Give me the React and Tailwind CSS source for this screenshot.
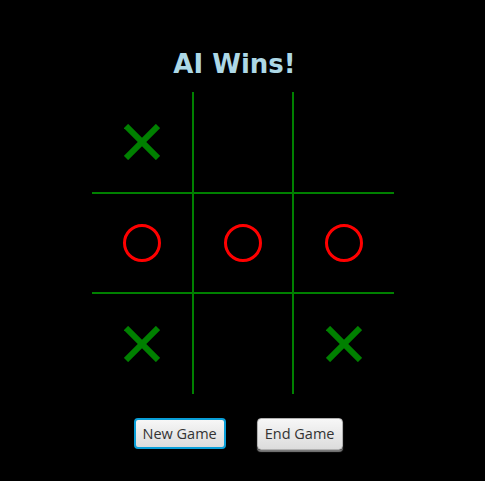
import React from 'react';

const board = [
  ['X', '', ''],
  ['O', 'O', 'O'],
  ['X', '', 'X'],
];

function Cross() {
  return (
    <svg width="36" height="36" viewBox="0 0 36 36">
      <line x1="2" y1="2" x2="34" y2="34" stroke="#008000" strokeWidth="6" />
      <line x1="34" y1="2" x2="2" y2="34" stroke="#008000" strokeWidth="6" />
    </svg>
  );
}

function Nought() {
  return (
    <svg width="40" height="40" viewBox="0 0 40 40">
      <circle cx="20" cy="20" r="17.5" fill="none" stroke="#ff0000" strokeWidth="3" />
    </svg>
  );
}

function Cell({ value, row, col }) {
  const right = col < 2 ? 'border-r-2 border-r-[#008000]' : '';
  const bottom = row < 2 ? 'border-b-2 border-b-[#008000]' : '';
  return (
    <div className={`flex items-center justify-center ${right} ${bottom}`}>
      {value === 'X' && <Cross />}
      {value === 'O' && <Nought />}
    </div>
  );
}

export default function App() {
  return (
    <div className="w-[485px] h-[481px] bg-black flex flex-col items-center pt-[51px]">
      {/* Status */}
      <div className="pr-[16px] text-[26px] leading-none font-bold text-[#add8e6] font-['DejaVu_Sans',sans-serif]">
        AI Wins!
      </div>

      {/* Board */}
      <div className="mt-[15px] grid grid-cols-[102px_100px_100px] grid-rows-[102px_100px_100px]">
        {board.map((r, i) =>
          r.map((v, j) => <Cell key={`${i}-${j}`} value={v} row={i} col={j} />)
        )}
      </div>

      {/* Buttons */}
      <div className="mt-[24px] flex gap-[31px] pr-[9px] font-['Open_Sans',sans-serif]">
        <button className="h-[31px] px-[7px] rounded-[4px] border-2 border-[#0a9fd8] bg-gradient-to-b from-[#f7f7f7] to-[#dcdcdc] text-[14.5px] text-[#333333] shadow-[0_1px_1px_rgba(0,0,0,0.4)]">
          New Game
        </button>
        <button className="h-[32px] px-[7px] rounded-[4px] border border-[#b0b0b0] bg-gradient-to-b from-[#f7f7f7] to-[#dcdcdc] text-[14.5px] text-[#333333] shadow-[0_2px_1px_#7a7a7a]">
          End Game
        </button>
      </div>
    </div>
  );
}
